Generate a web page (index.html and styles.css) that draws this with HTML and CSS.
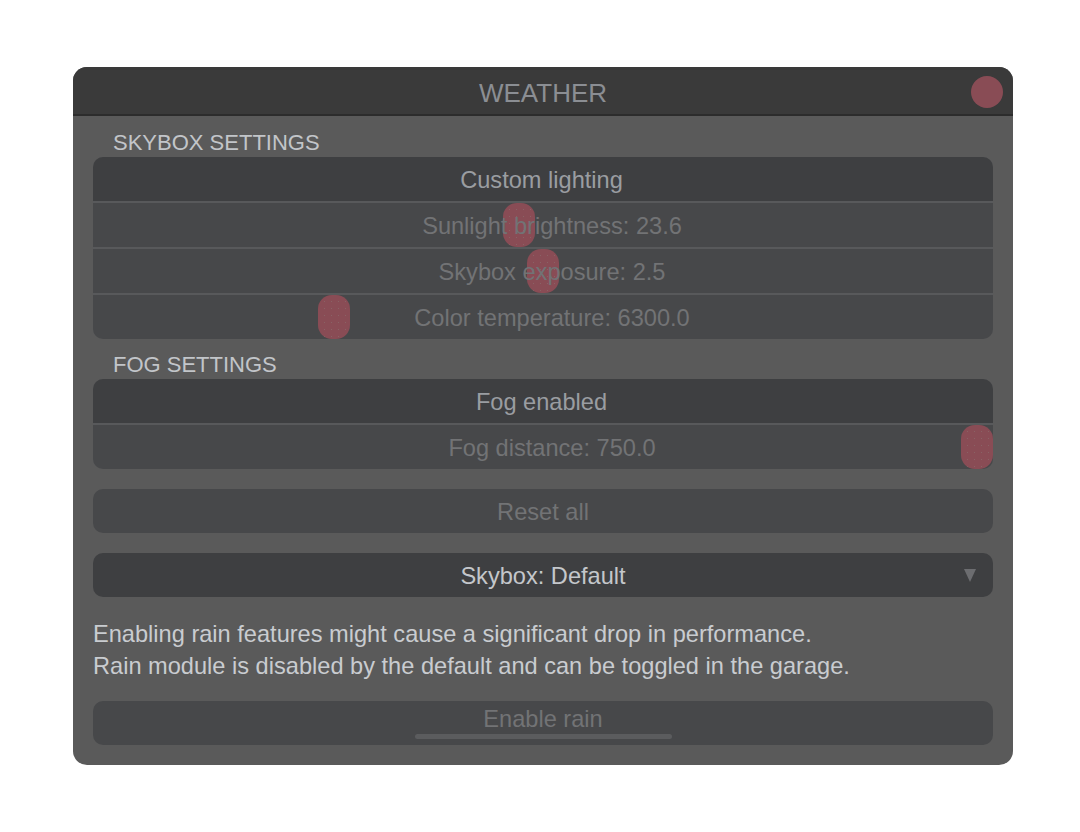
FILE: index.html
```html
<!DOCTYPE html>
<html>
<head>
<meta charset="utf-8">
<link rel="stylesheet" href="styles.css">
</head>
<body>
<div class="window">
  <div class="titlebar">
    <span class="title">WEATHER</span>
    <span class="close"></span>
  </div>
  <div class="content">
    <div class="section-label first">SKYBOX SETTINGS</div>
    <div class="group">
      <div class="row toggle">Custom lighting</div>
      <div class="row slider"><span class="knob" style="left:410px"></span><span class="slabel">Sunlight brightness: 23.6</span></div>
      <div class="row slider"><span class="knob" style="left:434px"></span><span class="slabel">Skybox exposure: 2.5</span></div>
      <div class="row slider"><span class="knob" style="left:225px"></span><span class="slabel">Color temperature: 6300.0</span></div>
    </div>
    <div class="section-label">FOG SETTINGS</div>
    <div class="group">
      <div class="row toggle">Fog enabled</div>
      <div class="row slider"><span class="knob" style="left:868px"></span><span class="slabel">Fog distance: 750.0</span></div>
    </div>
    <div class="button disabled reset">Reset all</div>
    <div class="button dropdown">
      <span>Skybox: Default</span>
      <svg class="arrow" width="12" height="13" viewBox="0 0 12 13"><path d="M0 0 H12 L6 13 Z" fill="#6c6d70"/></svg>
    </div>
    <p class="note">Enabling rain features might cause a significant drop in performance.<br>Rain module is disabled by the default and can be toggled in the garage.</p>
    <div class="button disabled rain">
      <span class="rain-text">Enable rain</span>
      <span class="rain-bar"></span>
    </div>
  </div>
</div>
</body>
</html>
```

FILE: styles.css
```css
html, body {
  margin: 0;
  padding: 0;
  background: #ffffff;
}
body {
  font-family: "Liberation Sans", Arial, Helvetica, sans-serif;
  padding: 67px 0 0 73px;
}
.window {
  width: 940px;
  height: 698px;
  background: #5a5a5a;
  border-radius: 14px;
  overflow: hidden;
  box-sizing: border-box;
}
.titlebar {
  position: relative;
  height: 47px;
  background: #3a3a3a;
  border-bottom: 2px solid #2c2c2c;
  display: flex;
  align-items: center;
  justify-content: center;
}
.title {
  font-size: 26px;
  color: #8b8e93;
  line-height: 30px;
  margin-top: 4px;
}
.close {
  position: absolute;
  right: 10px;
  top: 9px;
  width: 32px;
  height: 32px;
  border-radius: 50%;
  background: #894c55;
}
.content {
  padding: 0 20px;
  display: flex;
  flex-direction: column;
}
.section-label {
  font-size: 22px;
  color: #c2c5c9;
  line-height: 26px;
  height: 40px;
  box-sizing: border-box;
  padding: 13px 0 0 20px;
}
.section-label.first {
  height: 41px;
  padding-top: 14px;
}
.group {
  border-radius: 10px;
  overflow: hidden;
  background: #58595b;
  display: flex;
  flex-direction: column;
  gap: 2px;
}
.row {
  height: 44px;
  box-sizing: border-box;
  padding-top: 2px;
  display: flex;
  align-items: center;
  justify-content: center;
  font-size: 23.6px;
  position: relative;
}
.toggle {
  background: #3e3f41;
  color: #9a9da1;
  padding-right: 3px;
}
.slider {
  background: #47484a;
  color: #727375;
  padding-left: 18px;
}
.slabel {
  position: relative;
  z-index: 1;
}
.knob {
  position: absolute;
  top: 0;
  width: 32px;
  height: 44px;
  border-radius: 14px;
  background-color: #894c55;
  background-image: radial-gradient(circle, rgba(140,150,140,0.3) 0.5px, transparent 0.8px);
  background-size: 7px 7px;
  background-position: 3px 3px;
}
.button {
  height: 44px;
  box-sizing: border-box;
  padding-top: 2px;
  border-radius: 10px;
  display: flex;
  align-items: center;
  justify-content: center;
  font-size: 23.6px;
  position: relative;
}
.disabled {
  background: #47484a;
  color: #727375;
}
.reset {
  margin-top: 20px;
}
.dropdown {
  margin-top: 20px;
  background: #3e3f41;
  color: #c4c7cb;
}
.arrow {
  position: absolute;
  right: 17px;
  top: 16px;
}
.note {
  margin: 21px 0 0 0;
  font-size: 23.6px;
  line-height: 32px;
  color: #c9ccd0;
}
.rain {
  margin-top: 19px;
  flex-direction: column;
  justify-content: flex-start;
  padding-top: 5px;
}
.rain-text {
  line-height: 26px;
}
.rain-bar {
  margin-top: 2px;
  width: 257px;
  height: 5px;
  border-radius: 3px;
  background: #5b5c5e;
}
```
